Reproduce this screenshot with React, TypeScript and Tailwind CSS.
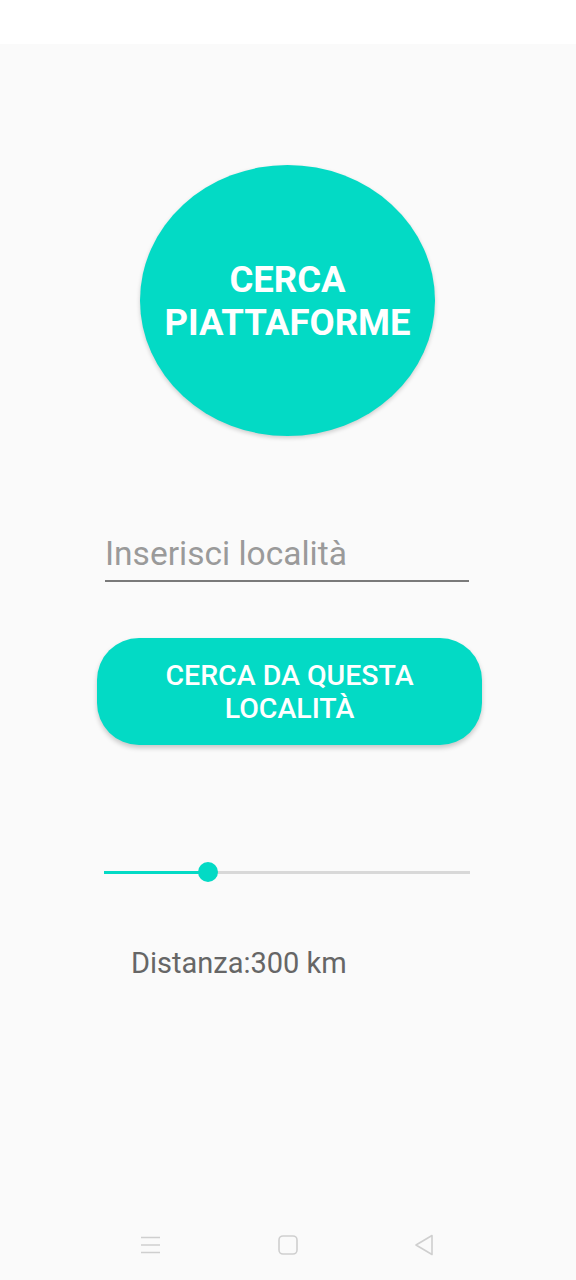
import React from 'react';

const TEAL = 'bg-[#03dac5]';

const NavBar: React.FC = () => (
  <div className="h-[70px] flex items-center text-[#cfcfcf]">
    <svg className="ml-[140px]" width="21" height="20" viewBox="0 0 21 20" fill="none" stroke="currentColor" strokeWidth="1.6">
      <path d="M1 2.5h19M1 10h19M1 17.5h19" />
    </svg>
    <svg className="ml-[116px]" width="22" height="22" viewBox="0 0 22 22" fill="none" stroke="currentColor" strokeWidth="1.6">
      <rect x="2" y="2" width="18" height="18" rx="4" />
    </svg>
    <svg className="ml-[114px]" width="22" height="24" viewBox="0 0 22 24" fill="none" stroke="currentColor" strokeWidth="1.6" strokeLinejoin="round">
      <path d="M19 2.5 L3 12 L19 21.5 Z" />
    </svg>
  </div>
);

export default function App() {
  return (
    <div className="w-[576px] min-h-[1280px] flex flex-col font-['Roboto',sans-serif]">
      <div className="h-[44px] bg-white" />
      <div className="flex-1 bg-[#fafafa] flex flex-col">
        {/* Big round button */}
        <div
          className={`mt-[121px] ml-[140px] w-[295px] h-[271px] rounded-[50%] ${TEAL} shadow-[0_2px_4px_rgba(0,0,0,0.18)] flex items-center justify-center`}
        >
          <div className="text-white font-bold text-[36.5px] leading-[43px] text-center">
            CERCA
            <br />
            PIATTAFORME
          </div>
        </div>

        {/* Location input */}
        <div className="mt-[91px] ml-[105px] w-[364px] h-[55px] border-b-2 border-[#7a7a7a] flex items-center">
          <span className="text-[33.5px] leading-[40px] text-[#9a9a9a]">Inserisci località</span>
        </div>

        {/* Search button */}
        <div
          className={`mt-[56px] ml-[97px] w-[385px] h-[107px] rounded-[42px] ${TEAL} shadow-[0_3px_5px_rgba(0,0,0,0.2)] flex items-center justify-center`}
        >
          <div className="text-white font-medium text-[28.5px] leading-[33px] text-center">
            CERCA DA QUESTA
            <br />
            LOCALITÀ
          </div>
        </div>

        {/* Distance slider */}
        <div className="mt-[117px] ml-[104px] w-[366px] h-[20px] flex items-center">
          <div className="w-[104px] h-[3px] bg-[#03dac5]" />
          <div className="w-[20px] h-[20px] -mx-[10px] rounded-full bg-[#03dac5] relative" />
          <div className="flex-1 h-[3px] bg-[#d8d8d8]" />
        </div>

        <div className="mt-[65px] ml-[131px] text-[29px] leading-[32px] text-[#666666]">Distanza:300 km</div>

        <div className="flex-1" />
        <NavBar />
      </div>
    </div>
  );
}
